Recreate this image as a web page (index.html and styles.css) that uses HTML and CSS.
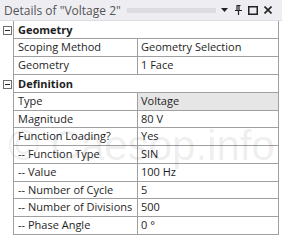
FILE: index.html
```html
<!DOCTYPE html>
<html lang="en">
<head>
	<meta charset="UTF-8">
	<title>Details of "Voltage 2"</title>
	<link rel="stylesheet" href="styles.css">
</head>
<body>
	<div class="panel">
		<div class="title">
			<span class="caption">Details of "Voltage 2"</span>
			<span class="grip"></span>
			<span class="tools">
				<svg width="8" height="5" viewBox="0 0 8 5"><path d="M0 0H7L3.5 4Z" fill="#222"/></svg>
				<svg width="7" height="10" viewBox="0 0 7 10"><path d="M1.5 0.5H5.5M2 0.5V5.5M4 0.5V5.5M0 5.5H7M3.5 5.5V10" stroke="#222" stroke-width="1.2" fill="none"/></svg>
				<svg width="10" height="9" viewBox="0 0 10 9"><rect x="0.75" y="0.75" width="8.5" height="7.5" stroke="#222" stroke-width="1.5" fill="none"/></svg>
				<svg width="8" height="8" viewBox="0 0 8 8"><path d="M0.5 0.5L7.5 7.5M7.5 0.5L0.5 7.5" stroke="#222" stroke-width="1.6"/></svg>
			</span>
		</div>
		<div class="grid">
			<div class="row">
				<div class="gut"><span class="toggle"></span></div>
				<div class="head">Geometry</div>
			</div>
			<div class="row">
				<div class="gut"></div>
				<div class="cell label">Scoping Method</div>
				<div class="cell value">Geometry Selection</div>
			</div>
			<div class="row">
				<div class="gut"></div>
				<div class="cell label">Geometry</div>
				<div class="cell value">1 Face</div>
			</div>
			<div class="row">
				<div class="gut"><span class="toggle"></span></div>
				<div class="head">Definition</div>
			</div>
			<div class="row">
				<div class="gut"></div>
				<div class="cell label">Type</div>
				<div class="cell value grey">Voltage</div>
			</div>
			<div class="row short">
				<div class="gut"></div>
				<div class="cell label">Magnitude</div>
				<div class="cell value">80 V</div>
			</div>
			<div class="row">
				<div class="gut"></div>
				<div class="cell label">Function Loading?</div>
				<div class="cell value">Yes</div>
			</div>
			<div class="row">
				<div class="gut"></div>
				<div class="cell label">-- Function Type</div>
				<div class="cell value">SIN</div>
			</div>
			<div class="row">
				<div class="gut"></div>
				<div class="cell label">-- Value</div>
				<div class="cell value">100 Hz</div>
			</div>
			<div class="row short">
				<div class="gut"></div>
				<div class="cell label">-- Number of Cycle</div>
				<div class="cell value">5</div>
			</div>
			<div class="row">
				<div class="gut"></div>
				<div class="cell label">-- Number of Divisions</div>
				<div class="cell value">500</div>
			</div>
			<div class="row">
				<div class="gut"></div>
				<div class="cell label">-- Phase Angle</div>
				<div class="cell value">0 °</div>
			</div>
		</div>
		<div class="mark">© Caesop.info</div>
	</div>
</body>
</html>
```

FILE: styles.css
```css
*{
	margin: 0;
	padding: 0;
	box-sizing: border-box;
}
body{
	background: #fff;
	font-family: "Open Sans", sans-serif;
	font-size: 11px;
	color: #1e1e1e;
}
.panel{
	position: relative;
	width: 282px;
	height: 241px;
	overflow: hidden;
}
.title{
	display: flex;
	align-items: center;
	height: 21px;
	background: #eeeef2;
	border-bottom: 1px solid #dcdce2;
	padding: 0 10px 0 4px;
}
.caption{
	font-size: 12px;
	color: #555;
	white-space: nowrap;
}
.grip{
	flex: 1;
	height: 5px;
	margin: 0 5px 0 6px;
	background-image: radial-gradient(circle, #c4c4cc 0.6px, transparent 0.8px);
	background-size: 2px 2px;
}
.tools{
	display: flex;
	align-items: center;
	gap: 6px;
}
.grid{
	display: flex;
	flex-flow: column;
}
.row{
	display: flex;
	height: 18px;
}
.row.short{
	height: 17px;
}
.gut{
	width: 13px;
	display: flex;
	align-items: center;
	justify-content: center;
}
.toggle{
	position: relative;
	width: 9px;
	height: 9px;
	border: 1px solid #6e6e6e;
	background: #fff;
	margin-left: 1px;
}
.toggle::after{
	content: "";
	position: absolute;
	left: 1px;
	right: 1px;
	top: 3px;
	height: 1px;
	background: #222;
}
.head{
	width: 266px;
	font-weight: bold;
	border-left: 1px solid #a0a0a0;
	border-right: 1px solid #a0a0a0;
	border-bottom: 1px solid #a0a0a0;
	padding-left: 4px;
	line-height: 17px;
}
.cell{
	border-left: 1px solid #a0a0a0;
	border-bottom: 1px solid #a0a0a0;
	padding-left: 4px;
	line-height: 16px;
	white-space: nowrap;
	overflow: hidden;
}
.label{
	width: 124px;
}
.value{
	width: 142px;
	border-right: 1px solid #a0a0a0;
	padding-left: 3px;
}
.grey{
	background: #e6e6e6;
}
.mark{
	position: absolute;
	left: 8px;
	top: 122px;
	font-family: "Liberation Sans", sans-serif;
	font-size: 42px;
	color: rgba(0, 0, 0, 0.08);
	white-space: nowrap;
	pointer-events: none;
}
```
